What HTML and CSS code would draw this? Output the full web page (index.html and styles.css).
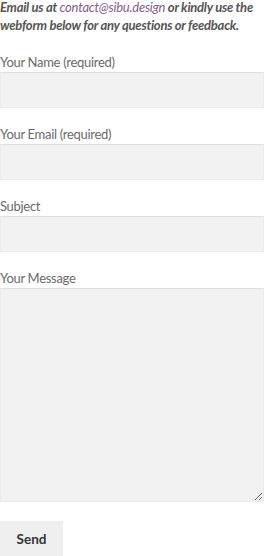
FILE: index.html
```html
<!DOCTYPE html>
<html>
<head>
<meta charset="utf-8">
<link rel="stylesheet" href="styles.css">
</head>
<body>
<div class="page">
  <p class="intro">Email us at <a href="#" class="mail">contact@sibu.design</a> or kindly use the webform below for any questions or feedback.</p>
  <form class="form">
    <div class="field">
      <label class="label">Your Name (required)</label>
      <input class="input" type="text">
    </div>
    <div class="field">
      <label class="label">Your Email (required)</label>
      <input class="input" type="text">
    </div>
    <div class="field">
      <label class="label">Subject</label>
      <input class="input" type="text">
    </div>
    <div class="field">
      <label class="label">Your Message</label>
      <textarea class="textarea"></textarea>
    </div>
    <button type="button" class="send">Send</button>
  </form>
</div>
</body>
</html>
```
FILE: styles.css
```css
html, body {
  margin: 0;
  padding: 0;
  background: #fff;
}
body {
  font-family: "Lato", "Open Sans", sans-serif;
  color: #666;
  font-size: 13px;
}
.page {
  width: 264px;
  overflow: hidden;
}
.intro {
  margin: -2px 0 0 0;
  font-style: italic;
  font-weight: 700;
  font-size: 13px;
  letter-spacing: -0.25px;
  line-height: 18px;
  color: #555;
  height: 54px;
}
.mail {
  color: #8c5a8c;
  font-weight: 400;
  text-decoration: none;
}
.form {
  display: flex;
  flex-direction: column;
}
.field {
  display: flex;
  flex-direction: column;
  margin-bottom: 16px;
}
.label {
  display: block;
  line-height: 20px;
  font-size: 13px;
  letter-spacing: -0.3px;
  color: #6b6b6b;
}
.input, .textarea {
  box-sizing: border-box;
  width: 264px;
  margin: 0;
  background: #f2f2f2;
  border: 1px solid #ebebeb;
  border-top-color: #dedede;
  font: inherit;
}
.input {
  height: 36px;
}
.textarea {
  height: 214px;
  resize: vertical;
}
.field:last-of-type {
  margin-bottom: 19px;
}
.send {
  align-self: flex-start;
  width: 63px;
  height: 36px;
  border: none;
  background: #efefef;
  color: #333;
  font-family: "Lato", sans-serif;
  font-weight: 700;
  font-size: 13.5px;
  padding: 0;
}
```
